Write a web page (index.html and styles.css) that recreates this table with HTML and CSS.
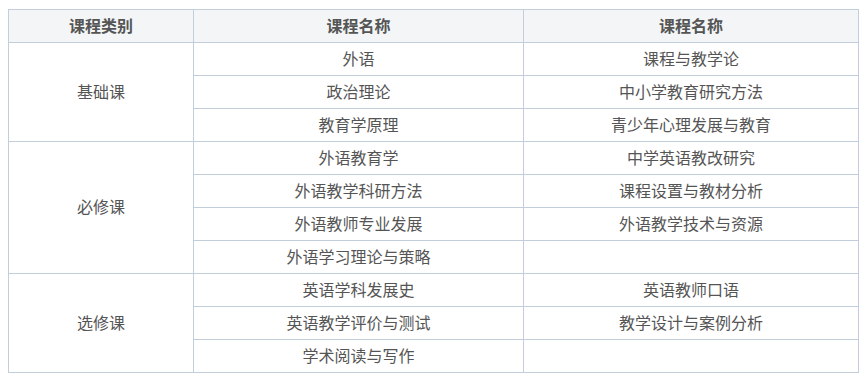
FILE: index.html
```html
<!DOCTYPE html>
<html lang="zh">
<head>
<meta charset="utf-8">
<link rel="stylesheet" href="styles.css">
</head>
<body>
<table class="course-table">
  <colgroup>
    <col class="c1"><col class="c2"><col class="c3">
  </colgroup>
  <thead>
    <tr><th>课程类别</th><th>课程名称</th><th>课程名称</th></tr>
  </thead>
  <tbody>
    <tr><td rowspan="3">基础课</td><td>外语</td><td>课程与教学论</td></tr>
    <tr><td>政治理论</td><td>中小学教育研究方法</td></tr>
    <tr><td>教育学原理</td><td>青少年心理发展与教育</td></tr>
    <tr><td rowspan="4">必修课</td><td>外语教育学</td><td>中学英语教改研究</td></tr>
    <tr><td>外语教学科研方法</td><td>课程设置与教材分析</td></tr>
    <tr><td>外语教师专业发展</td><td>外语教学技术与资源</td></tr>
    <tr><td>外语学习理论与策略</td><td></td></tr>
    <tr><td rowspan="3">选修课</td><td>英语学科发展史</td><td>英语教师口语</td></tr>
    <tr><td>英语教学评价与测试</td><td>教学设计与案例分析</td></tr>
    <tr><td>学术阅读与写作</td><td></td></tr>
  </tbody>
</table>
</body>
</html>
```
FILE: styles.css
```css
html, body {
  margin: 0;
  padding: 0;
  background: #fff;
}
body {
  padding: 9px 8px 0 8px;
  font-family: "Microsoft YaHei", "Noto Sans CJK SC", sans-serif;
  font-size: 16px;
  color: #555;
}
.course-table {
  border-collapse: collapse;
  width: 850px;
  table-layout: fixed;
}
.c1 { width: 185px; }
.c2 { width: 330px; }
.c3 { width: 335px; }
.course-table tr {
  height: 33px;
}
.course-table th,
.course-table td {
  border: 1px solid #c3cedc;
  padding: 0 0 3px 0;
  text-align: center;
  vertical-align: middle;
  line-height: 20px;
}
.course-table th {
  background: #f3f5f7;
  font-weight: bold;
  color: #555;
}
```
